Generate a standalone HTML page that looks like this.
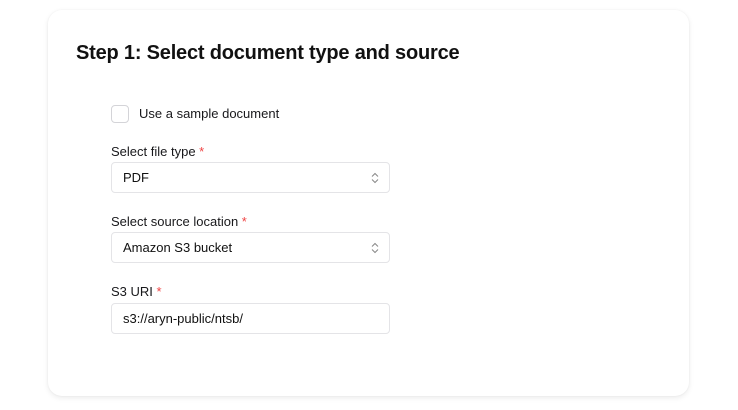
<!DOCTYPE html>
<html><head><style>
body{margin:0;width:738px;height:410px;background:#fff;font-family:"Liberation Sans",sans-serif;position:relative;overflow:hidden;color:#111}
.card{position:absolute;left:48px;top:10px;width:641px;height:386px;background:#fff;border-radius:14px;box-shadow:0 2px 6px rgba(0,0,0,0.08),0 0 2px rgba(0,0,0,0.05)}
h1{position:absolute;left:76px;top:42px;margin:0;font-size:20px;font-weight:bold;letter-spacing:-0.2px;color:#111}
.cb{position:absolute;left:111px;top:105px;width:16px;height:16px;border:1px solid #d4d4d8;border-radius:4px}
.t{position:absolute;font-size:13px;color:#18181b}
.lbl{position:absolute;left:111px;font-size:13px;color:#18181b}
.lbl span{color:#ef4444}
.box{position:absolute;left:111px;width:277px;height:29px;border:1px solid #e4e4e7;border-radius:4px;font-size:13px;line-height:29px;padding-left:11px;box-sizing:border-box;width:279px;height:31px}
.box svg{position:absolute;right:10px;top:9px}
</style></head><body>
<div class="card"></div>
<h1>Step 1: Select document type and source</h1>
<div class="cb"></div>
<div class="t" style="left:139px;top:106px">Use a sample document</div>
<div class="lbl" style="top:144px">Select file type <span>*</span></div>
<div class="box" style="top:162px">PDF<svg width="8" height="12" viewBox="0 0 8 12"><path d="M1 4.5L4 1.5L7 4.5M1 7.5L4 10.5L7 7.5" fill="none" stroke="#888" stroke-width="1"/></svg></div>
<div class="lbl" style="top:214px">Select source location <span>*</span></div>
<div class="box" style="top:232px">Amazon S3 bucket<svg width="8" height="12" viewBox="0 0 8 12"><path d="M1 4.5L4 1.5L7 4.5M1 7.5L4 10.5L7 7.5" fill="none" stroke="#888" stroke-width="1"/></svg></div>
<div class="lbl" style="top:284px">S3 URI <span>*</span></div>
<div class="box" style="top:303px">s3://aryn-public/ntsb/</div>
</body></html>
